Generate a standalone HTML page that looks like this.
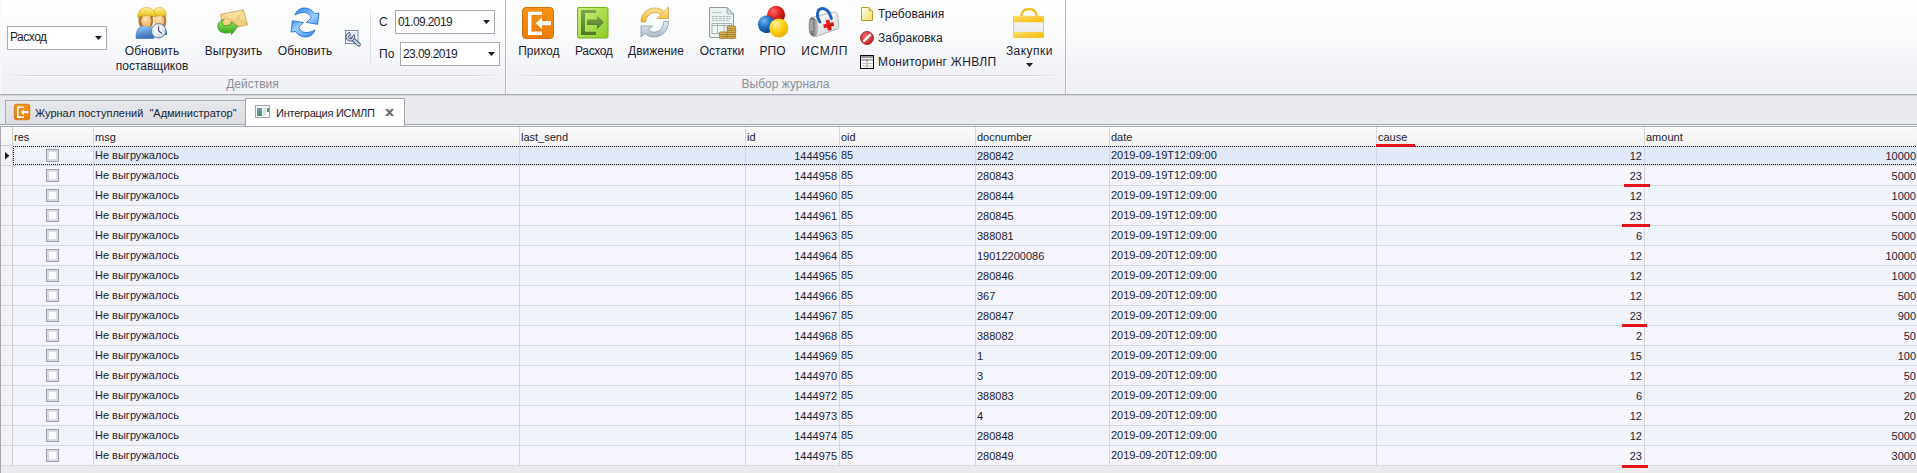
<!DOCTYPE html><html><head><meta charset="utf-8"><style>
*{margin:0;padding:0;box-sizing:border-box}
html,body{width:1917px;height:473px;overflow:hidden;background:#e9eaee;font-family:"Liberation Sans",sans-serif;color:#1c1c30}
.a{position:absolute}
.t12{position:absolute;font-size:12px;line-height:15px;white-space:pre;height:15px}
.t11{position:absolute;font-size:11px;line-height:13px;white-space:pre;height:13px}
.c{text-align:center}
.r{text-align:right}
svg{position:absolute;overflow:visible}
</style></head><body>
<div class="a" style="left:0;top:0;width:1917px;height:94px;background:linear-gradient(#fefefe 0%,#fafbfc 35%,#f1f2f6 80%,#eef0f4 100%)"></div>
<div class="a" style="left:0;top:94px;width:1917px;height:1px;background:#a9acb3"></div>
<div class="a" style="left:0;top:0;width:1px;height:94px;background:#f8f8fa"></div>
<div class="a" style="left:0;top:95px;width:1917px;height:1px;background:#d6d8dd"></div>
<div class="a" style="left:505px;top:0;width:1px;height:94px;background:#b6b9c0"></div>
<div class="a" style="left:506px;top:0;width:1px;height:94px;background:#fbfbfc"></div>
<div class="a" style="left:1065px;top:0;width:1px;height:94px;background:#b6b9c0"></div>
<div class="a" style="left:1066px;top:0;width:1px;height:94px;background:#fbfbfc"></div>
<div class="a" style="left:4px;top:75px;width:499px;height:1px;background:linear-gradient(90deg,rgba(216,217,222,0),#d8d9de 6%,#d8d9de 94%,rgba(216,217,222,0))"></div>
<div class="a" style="left:4px;top:76px;width:499px;height:1px;background:linear-gradient(90deg,rgba(255,255,255,0),#fdfdfe 6%,#fdfdfe 94%,rgba(255,255,255,0))"></div>
<div class="a" style="left:509px;top:75px;width:554px;height:1px;background:linear-gradient(90deg,rgba(216,217,222,0),#d8d9de 6%,#d8d9de 94%,rgba(216,217,222,0))"></div>
<div class="a" style="left:509px;top:76px;width:554px;height:1px;background:linear-gradient(90deg,rgba(255,255,255,0),#fdfdfe 6%,#fdfdfe 94%,rgba(255,255,255,0))"></div>
<div class="t12 c" style="left:0;top:77px;width:505px;color:#8d9099">Действия</div>
<div class="t12 c" style="left:506px;top:77px;width:559px;color:#8d9099">Выбор журнала</div>
<div class="a" style="left:370px;top:7px;width:1px;height:61px;background:linear-gradient(rgba(220,222,226,0),#dcdee2 15%,#dcdee2 85%,rgba(220,222,226,0))"></div>
<div class="a" style="left:7px;top:26px;width:100px;height:24px;background:#fff;border:1px solid #a7aab1"></div>
<div class="t12" style="left:10px;top:30px;letter-spacing:-0.5px">Расход</div>
<svg style="left:95px;top:36px" width="7" height="4"><path d="M0,0 H7 L3.5,4 Z" fill="#1b1b2b"/></svg>
<div class="t12" style="left:379px;top:15px">С</div>
<div class="a" style="left:395px;top:10px;width:100px;height:24px;background:#fff;border:1px solid #a7aab1"></div>
<div class="t12" style="left:398px;top:15px;letter-spacing:-0.6px">01.09.2019</div>
<svg style="left:483px;top:20px" width="7" height="4"><path d="M0,0 H7 L3.5,4 Z" fill="#1b1b2b"/></svg>
<div class="t12" style="left:379px;top:47px">По</div>
<div class="a" style="left:400px;top:42px;width:100px;height:24px;background:#fff;border:1px solid #a7aab1"></div>
<div class="t12" style="left:403px;top:47px;letter-spacing:-0.6px">23.09.2019</div>
<svg style="left:488px;top:52px" width="7" height="4"><path d="M0,0 H7 L3.5,4 Z" fill="#1b1b2b"/></svg>
<div class="t12 c" style="left:92.0px;top:44px;width:120px">Обновить</div>
<div class="t12 c" style="left:92.0px;top:59px;width:120px">поставщиков</div>
<div class="t12 c" style="left:173.5px;top:44px;width:120px">Выгрузить</div>
<div class="t12 c" style="left:245.0px;top:44px;width:120px">Обновить</div>
<div class="t12 c" style="left:478.79999999999995px;top:44px;width:120px">Приход</div>
<div class="t12 c" style="left:533.8px;top:44px;width:120px"><span style='letter-spacing:-0.35px'>Расход</span></div>
<div class="t12 c" style="left:596.0px;top:44px;width:120px">Движение</div>
<div class="t12 c" style="left:662.0px;top:44px;width:120px">Остатки</div>
<div class="t12 c" style="left:712.5px;top:44px;width:120px">РПО</div>
<div class="t12 c" style="left:764.7px;top:44px;width:120px"><span style='letter-spacing:0.6px'>ИСМЛП</span></div>
<div class="t12 c" style="left:969.4000000000001px;top:44px;width:120px"><span style='letter-spacing:0.45px'>Закупки</span></div>
<svg style="left:1026px;top:63px" width="7" height="4"><path d="M0,0 H7 L3.5,4 Z" fill="#1b1b2b"/></svg>
<div class="t12" style="left:878px;top:7px">Требования</div>
<div class="t12" style="left:878px;top:31px">Забраковка</div>
<div class="t12" style="left:878px;top:55px;letter-spacing:0.27px">Мониторинг ЖНВЛП</div>
<!-- users + clock -->
<svg style="left:135px;top:7px" width="32" height="32" viewBox="0 0 32 32">
<defs>
<linearGradient id="hair" x1="0" y1="0" x2="0" y2="1"><stop offset="0" stop-color="#fff0a0"/><stop offset="0.6" stop-color="#f4cf3a"/><stop offset="1" stop-color="#e0aa10"/></linearGradient>
<radialGradient id="skin" cx="0.45" cy="0.35" r="0.7"><stop offset="0" stop-color="#ffe6b0"/><stop offset="1" stop-color="#eeb060"/></radialGradient>
<linearGradient id="body" x1="0" y1="0" x2="0.3" y2="1"><stop offset="0" stop-color="#a8d0f4"/><stop offset="0.5" stop-color="#6aa4e0"/><stop offset="1" stop-color="#3a70bc"/></linearGradient>
<radialGradient id="clk" cx="0.4" cy="0.35" r="0.75"><stop offset="0" stop-color="#ffffff"/><stop offset="0.7" stop-color="#dfe6f4"/><stop offset="1" stop-color="#9eaccc"/></radialGradient>
</defs>
<path d="M30.5,9 C31.8,13 31.5,18 29.5,21 L27,21 L27,9 Z" fill="#b47a3a"/>
<path d="M15,28 C15,22 18,18.5 24,18.5 C30,18.5 32,22 32,28 Z" fill="url(#body)"/>
<ellipse cx="24.2" cy="13.8" rx="5" ry="5.8" fill="url(#skin)"/>
<path d="M17,10.5 C16.8,3.5 20.5,0.5 24.5,0.5 C28.5,0.5 31.5,3.5 31,10 C29,8.8 27,8.5 24.5,8.5 C21.5,8.5 19,9.2 17,10.5 Z" fill="url(#hair)" stroke="#d2a418" stroke-width="0.6"/>
<path d="M4.2,9 C2.8,13 3.3,18 5.8,20 L8,20 L8,9 Z M17.5,9 C18.5,13 18.5,17 16.5,20 L15,20 L15,9 Z" fill="#b47a3a"/>
<path d="M1,31.5 C0.8,24 3.5,18.5 10,18.5 C16.5,18.5 19.3,24 19,31.5 Z" fill="url(#body)" stroke="#3c6fb4" stroke-width="0.6"/>
<ellipse cx="11.2" cy="13.8" rx="5" ry="5.8" fill="url(#skin)"/>
<path d="M2.8,10.8 C2.6,3.5 6.5,0.5 11.5,0.5 C16.5,0.5 20.8,3.5 20.5,10 C18,8.8 15,8.4 11.5,8.4 C8,8.4 5,9.2 2.8,10.8 Z" fill="url(#hair)" stroke="#d2a418" stroke-width="0.6"/>
<circle cx="23.6" cy="23.8" r="7.2" fill="url(#clk)" stroke="#6e7c9c" stroke-width="1"/>
<path d="M23.6,17.8 V19 M23.6,28.6 V29.8 M17.6,23.8 H18.8 M28.4,23.8 H29.6" stroke="#8a96b0" stroke-width="0.8"/>
<path d="M23.6,19.5 V23.8 L26.8,26.5" stroke="#3a4460" stroke-width="1.1" fill="none"/>
</svg>
<!-- envelope + green arrow -->
<svg style="left:216px;top:5px" width="32" height="32" viewBox="0 0 32 32">
<defs>
<linearGradient id="env" x1="0" y1="0" x2="0" y2="1"><stop offset="0" stop-color="#fde9b0"/><stop offset="1" stop-color="#f0c468"/></linearGradient>
<linearGradient id="grn" x1="0" y1="0" x2="0" y2="1"><stop offset="0" stop-color="#a8f070"/><stop offset="1" stop-color="#2aa010"/></linearGradient>
</defs>
<path d="M4.6,9.4 L27.4,4.8 L31.5,19.8 L7.8,24.8 Z" fill="url(#env)" stroke="#c99a4a" stroke-width="0.8"/>
<path d="M4.8,9.6 L19,17.5 L27.2,5 M8,24.6 L17.5,15.5 M31.3,19.6 L21,13" stroke="#d9ad60" stroke-width="0.7" fill="none"/>
<path d="M8.5,14.2 C2,15.8 0.3,21 3,25 C5.5,28.5 10.5,28.6 15.5,27.2 L15.5,29.6 L21.8,21.5 L15,16.8 L15,19.6 C11,21.2 7.2,21 6,19 C5.3,17.5 6.5,15.5 8.5,14.2 Z" fill="url(#grn)" stroke="#279012" stroke-width="0.7"/>
</svg>
<!-- refresh blue -->
<svg style="left:289px;top:6px" width="32" height="32" viewBox="0 0 32 32">
<defs>
<linearGradient id="blu" x1="0" y1="0" x2="1" y2="1"><stop offset="0" stop-color="#2c86ee"/><stop offset="0.65" stop-color="#9ad0ff"/><stop offset="1" stop-color="#4a94ec"/></linearGradient>
</defs>
<path id="rfa" d="M6,9 C8,3.5 12,2 15.5,2 C20,2 23.5,4.5 25.5,7.5 L30,7 L28.6,18.3 L17.5,16.4 L22.3,11.8 C20.8,8.5 18.5,6.5 15.5,6.5 C11.5,6.5 8.5,7.5 6,9 Z" fill="url(#blu)" stroke="#1a66d2" stroke-width="0.8"/>
<path d="M6,9 C8,3.5 12,2 15.5,2 C20,2 23.5,4.5 25.5,7.5 L30,7 L28.6,18.3 L17.5,16.4 L22.3,11.8 C20.8,8.5 18.5,6.5 15.5,6.5 C11.5,6.5 8.5,7.5 6,9 Z" fill="url(#blu)" stroke="#1a66d2" stroke-width="0.8" transform="rotate(180 16 16.5)"/>
</svg>
<!-- wrench small -->
<svg style="left:345px;top:30px" width="16" height="17" viewBox="0 0 16 17">
<rect x="0.5" y="0.5" width="12.5" height="13" fill="#f2f5fb" stroke="#7b8ec6" stroke-width="1"/>
<path d="M7,8.5 L13.8,14.6" stroke="#4c5672" stroke-width="4" stroke-linecap="round"/>
<path d="M7,8.5 L13.8,14.6" stroke="#c4d3e8" stroke-width="2.2" stroke-linecap="round"/>
<path d="M9.2,4.6 A4.4,4.4 0 1 1 4.6,2.4 L5.6,5.2 A1.8,1.8 0 1 0 7.2,6.4 Z" fill="#c4d3e8" stroke="#4c5672" stroke-width="1"/>
</svg>
<!-- Prihod orange -->
<svg style="left:522px;top:7px" width="32" height="32" viewBox="0 0 32 32">
<defs><linearGradient id="org" x1="0" y1="0" x2="0" y2="1"><stop offset="0" stop-color="#f69218"/><stop offset="1" stop-color="#ec7c00"/></linearGradient></defs>
<rect x="0.5" y="0.5" width="31" height="31" rx="3.5" fill="url(#org)" stroke="#d2700e" stroke-width="1"/>
<path d="M6,4.8 H20 V8 H9.4 V24.4 H20 V28 H6 Z" fill="#fff"/>
<path d="M13.8,16.2 L20,10.3 V14 H29 V18.3 H20 V22.3 Z" fill="#fff"/>
</svg>
<!-- Rashod green -->
<svg style="left:577px;top:7px" width="32" height="32" viewBox="0 0 32 32">
<defs>
<linearGradient id="lg" x1="0" y1="0" x2="1" y2="1"><stop offset="0" stop-color="#d0f07a"/><stop offset="1" stop-color="#8ccc2a"/></linearGradient>
<linearGradient id="dg" x1="0" y1="0" x2="0" y2="1"><stop offset="0" stop-color="#7aa850"/><stop offset="1" stop-color="#4e7a26"/></linearGradient>
</defs>
<rect x="0.5" y="0.5" width="30.5" height="30.5" rx="1.5" fill="url(#lg)" stroke="#6eb21c" stroke-width="1"/>
<path d="M4,3 H19 V6 H8 V24.8 H19 V28 H4 Z" fill="url(#dg)"/>
<path d="M10,12.5 H20 V8.5 L27,15.3 L20,22 V18 H10 Z" fill="url(#dg)"/>
</svg>
<!-- Movement -->
<svg style="left:638px;top:5px" width="32" height="33" viewBox="0 0 32 33">
<defs>
<linearGradient id="yel" x1="0" y1="0" x2="0" y2="1"><stop offset="0" stop-color="#fdeaa8"/><stop offset="1" stop-color="#f2b628"/></linearGradient>
<linearGradient id="gry" x1="0" y1="0" x2="0" y2="1"><stop offset="0" stop-color="#e6edf2"/><stop offset="1" stop-color="#a9b9c8"/></linearGradient>
</defs>
<path d="M3,17 C3,9 9,3 17,3 C21,3 24,4.5 26,6.5 L30.5,2 V13.5 H19 L23,9.5 C21.5,8.3 19.5,7.7 17,7.7 C11.5,7.7 7.7,12 7.7,17 Z" fill="url(#yel)" stroke="#dba040" stroke-width="0.8"/>
<path d="M30.5,16.5 C30.5,25.5 24,32 16,32 C12,32 9,30.5 7,28.5 L3,32 V21 H14.5 L10.5,25 C12,26.3 14,27.2 16,27.2 C21.5,27.2 25.6,22.5 25.6,16.5 Z" fill="url(#gry)" stroke="#8797a8" stroke-width="0.8"/>
</svg>
<!-- Ostatki -->
<svg style="left:706px;top:5px" width="32" height="35" viewBox="0 0 32 35">
<path d="M3.5,2.5 H21 L27.5,9 V31 Q27.5,32.5 26,32.5 H5 Q3.5,32.5 3.5,31 Z" fill="#ecf3f3" stroke="#8c9c9c" stroke-width="1"/>
<path d="M21,2.5 V7.5 Q21,9 22.5,9 H27.5 Z" fill="#d4e0e0" stroke="#8c9c9c" stroke-width="0.8"/>
<path d="M6,7.5 H15 M6,11.5 H25 M6,13.5 H25 M6,15.5 H24" stroke="#9aa6a6" stroke-width="0.8" stroke-dasharray="2.5 1"/>
<rect x="6" y="18.5" width="19.5" height="10" fill="none" stroke="#a4b0b0" stroke-width="0.9"/>
<path d="M6,20.5 H25.5 M11.5,18.5 V28.5 M18,18.5 V28.5" stroke="#a4b0b0" stroke-width="0.9"/>
<g fill="#d8b45a" stroke="#9a7428" stroke-width="0.8">
<rect x="13.3" y="31" width="8" height="2.6" rx="1.3"/>
<rect x="13.3" y="29" width="8" height="2.6" rx="1.3"/>
<rect x="13.3" y="27" width="8" height="2.6" rx="1.3"/>
<rect x="21" y="31" width="8.8" height="2.6" rx="1.3"/>
<rect x="21" y="29" width="8.8" height="2.6" rx="1.3"/>
<rect x="21" y="27" width="8.8" height="2.6" rx="1.3"/>
<rect x="21" y="25" width="8.8" height="2.6" rx="1.3"/>
<rect x="21" y="23" width="8.8" height="2.6" rx="1.3"/>
<rect x="21" y="21" width="8.8" height="2.6" rx="1.3"/>
</g>
</svg>
<!-- RPO balls -->
<svg style="left:757px;top:5px" width="32" height="33" viewBox="0 0 32 33">
<defs>
<radialGradient id="rb" cx="0.35" cy="0.3" r="0.75"><stop offset="0" stop-color="#ff6a6a"/><stop offset="0.5" stop-color="#e02020"/><stop offset="1" stop-color="#a00808"/></radialGradient>
<radialGradient id="bb" cx="0.35" cy="0.3" r="0.75"><stop offset="0" stop-color="#7ab8f8"/><stop offset="0.5" stop-color="#1e6ec0"/><stop offset="1" stop-color="#0a4088"/></radialGradient>
<radialGradient id="yb" cx="0.35" cy="0.3" r="0.75"><stop offset="0" stop-color="#fff2a0"/><stop offset="0.5" stop-color="#fcd21a"/><stop offset="1" stop-color="#eaa800"/></radialGradient>
</defs>
<circle cx="19.1" cy="9.8" r="9" fill="url(#rb)"/>
<circle cx="9.6" cy="19.3" r="8.7" fill="url(#bb)"/>
<circle cx="21.8" cy="23" r="9.5" fill="url(#yb)"/>
</svg>
<!-- ISMLP medical bag -->
<svg style="left:805px;top:5px" width="36" height="35" viewBox="0 0 36 35">
<defs>
<linearGradient id="cap" x1="0" y1="0" x2="1" y2="0"><stop offset="0" stop-color="#d8d8d8"/><stop offset="0.3" stop-color="#6a6a6a"/><stop offset="0.75" stop-color="#9a9a9a"/><stop offset="1" stop-color="#e8e8e8"/></linearGradient>
<linearGradient id="bag" x1="0" y1="0" x2="0.4" y2="1"><stop offset="0" stop-color="#ffffff"/><stop offset="1" stop-color="#dedede"/></linearGradient>
<linearGradient id="crs" x1="0" y1="0" x2="1" y2="1"><stop offset="0" stop-color="#ff3030"/><stop offset="1" stop-color="#c80000"/></linearGradient>
</defs>
<path d="M7,12.5 L29,7 C31,6.8 32,8 32.5,10 L33.8,20.5 C34,22.5 33.5,23.5 32,24 L12,31.2 C9,32 4.5,31.5 4.3,25 L4.3,18 C4.3,15 5.2,13 7,12.5 Z" fill="url(#bag)" stroke="#a2a2a2" stroke-width="0.8"/>
<path d="M6.5,12.8 C4.5,13.5 4.2,17 4.3,23 C4.4,28 6,30.8 9,31 C11.5,30.7 12.3,28 12.2,22 C12,16 10.5,12.5 6.5,12.8 Z" fill="url(#cap)" stroke="#6a6a6a" stroke-width="0.6"/>
<path d="M7,15 V26" stroke="#f4f4f4" stroke-width="0.8"/>
<path d="M15,17 C11,12 11.5,3.5 17.5,3.5 C22,3.5 24.5,7 26.5,13.5" stroke="#1f5fc0" stroke-width="2.8" fill="none" stroke-linecap="round"/>
<g transform="rotate(-14 23.5 20.2)" fill="url(#crs)"><rect x="21.7" y="14.8" width="3.8" height="10.6"/><rect x="18.4" y="18.3" width="10.4" height="3.8"/></g>
</svg>
<!-- Trebovaniya doc -->
<svg style="left:861px;top:7px" width="13" height="15" viewBox="0 0 13 15">
<defs><linearGradient id="pd" x1="0" y1="0" x2="0.6" y2="1"><stop offset="0" stop-color="#fffef0"/><stop offset="1" stop-color="#f3e47a"/></linearGradient></defs>
<path d="M0.5,0.5 H8 L11.5,4 V13.5 H0.5 Z" fill="url(#pd)" stroke="#c49a20" stroke-width="1"/>
<path d="M8,0.5 V4 H11.5" fill="none" stroke="#c49a20" stroke-width="0.8"/>
</svg>
<!-- Zabrakovka -->
<svg style="left:860px;top:31px" width="14" height="14" viewBox="0 0 14 14">
<defs><radialGradient id="nr" cx="0.4" cy="0.35" r="0.7"><stop offset="0" stop-color="#f07070"/><stop offset="1" stop-color="#b81c1c"/></radialGradient></defs>
<circle cx="7" cy="7" r="6.5" fill="url(#nr)" stroke="#a01818" stroke-width="0.8"/>
<path d="M3.3,10.7 L10.7,3.3" stroke="#fff" stroke-width="2.4"/>
</svg>
<!-- Monitoring table -->
<svg style="left:860px;top:55px" width="15" height="15" viewBox="0 0 15 15">
<rect x="0.5" y="0.5" width="13" height="13" fill="#fff" stroke="#0a0a0a" stroke-width="1"/>
<rect x="1" y="1" width="12" height="2.2" fill="#9c9c9c"/>
<rect x="1" y="4" width="12" height="2" fill="#b4b4b4"/>
<path d="M7,4 V13.5" stroke="#8a8a8a" stroke-width="1"/>
<path d="M2,8.5 H6 M8,8.5 H12.5 M2,11 H6 M8,11 H12.5" stroke="#b8b8b8" stroke-width="0.9"/>
</svg>
<!-- Zakupki bag -->
<svg style="left:1012px;top:6px" width="33" height="33" viewBox="0 0 33 33">
<defs>
<linearGradient id="zy" x1="0" y1="0" x2="1" y2="1"><stop offset="0" stop-color="#ffe070"/><stop offset="1" stop-color="#f8b800"/></linearGradient>
<linearGradient id="zw" x1="0" y1="0" x2="0" y2="1"><stop offset="0" stop-color="#fafafa"/><stop offset="1" stop-color="#e4e4e4"/></linearGradient>
</defs>
<path d="M9.4,11 C9.4,5.2 12.8,3.2 17,3.2 C21.2,3.2 24.6,5.2 24.6,11" stroke="#efb80c" stroke-width="2.3" fill="none"/>
<path d="M10.2,11 C10.2,6 13.2,4 17,4 C20.8,4 23.8,6 23.8,11" stroke="#ffe27a" stroke-width="0.6" fill="none"/>
<rect x="1.7" y="10.2" width="29.8" height="21.3" fill="url(#zw)" stroke="#e2ac00" stroke-width="0.6"/>
<rect x="1.7" y="10.2" width="29.8" height="6" fill="url(#zy)"/>
<rect x="1.7" y="26" width="29.8" height="5.5" fill="url(#zy)"/>
</svg>

<div class="a" style="left:0;top:124px;width:1917px;height:1px;background:#a3a6ae"></div>
<div class="a" style="left:0;top:125px;width:1917px;height:1px;background:#f4f5f7"></div>
<div class="a" style="left:5px;top:100px;width:241px;height:24px;background:linear-gradient(#e6e7eb,#dcdde2);border:1px solid #a8abb2;border-bottom:none"></div>
<div class="t11" style="left:35px;top:107px">Журнал поступлений  "Администратор"</div>
<div class="a" style="left:245px;top:98px;width:160px;height:28px;background:#fff;border:1px solid #a3a6ae;border-bottom:none"></div>
<div class="t11" style="left:276px;top:107px;letter-spacing:-0.25px">Интеграция ИСМЛП</div>

<svg style="left:14px;top:104px" width="16" height="16" viewBox="0 0 32 32">
<rect x="0.5" y="0.5" width="31" height="31" rx="4" fill="url(#org)" stroke="#d2700e" stroke-width="1.5"/>
<path d="M6,4.8 H20 V8 H9.4 V24.4 H20 V28 H6 Z" fill="#fff"/>
<path d="M13.8,16.2 L20,10.3 V14 H29 V18.3 H20 V22.3 Z" fill="#fff"/>
</svg>
<!-- tab window icon -->
<svg style="left:255px;top:105px" width="15" height="13" viewBox="0 0 15 13">
<defs><linearGradient id="wg" x1="0" y1="0" x2="0.3" y2="1"><stop offset="0" stop-color="#6e9cc6"/><stop offset="1" stop-color="#3f9c5e"/></linearGradient></defs>
<rect x="0.5" y="0.5" width="14" height="12" fill="#fbfbfb" stroke="#a2a2a2" stroke-width="1"/>
<rect x="2" y="3" width="5" height="8" fill="url(#wg)"/>
<rect x="8" y="3" width="3" height="8" fill="#dedede"/>
<rect x="12" y="3" width="2" height="4" fill="url(#wg)"/>
</svg>

<svg style="left:384px;top:108px" width="11" height="9"><path d="M1,1 H4 L10.2,8 H7.2 Z M7.2,1 H10.2 L4,8 H1 Z" fill="#6c707c"/></svg>
<div class="a" style="left:0;top:126px;width:1917px;height:1px;background:#a6a9b1"></div>
<div class="a" style="left:0;top:126px;width:1px;height:347px;background:#a6a9b1"></div>
<div class="a" style="left:1px;top:466px;width:1916px;height:7px;background:#ebebee"></div>
<div class="a" style="left:1px;top:127px;width:1916px;height:18px;background:linear-gradient(#fafafa,#f3f3f4)"></div>
<div class="a" style="left:1px;top:145px;width:11px;height:1px;background:#d0d2d7"></div>
<div class="a" style="left:13px;top:145px;width:1904px;height:1px;background:#e9eaed"></div>
<div class="t11" style="left:14px;top:131px">res</div>
<div class="t11" style="left:95px;top:131px">msg</div>
<div class="t11" style="left:521px;top:131px">last_send</div>
<div class="t11" style="left:747px;top:131px">id</div>
<div class="t11" style="left:841px;top:131px">oid</div>
<div class="t11" style="left:977px;top:131px">docnumber</div>
<div class="t11" style="left:1111px;top:131px">date</div>
<div class="t11" style="left:1378px;top:131px">cause</div>
<div class="t11" style="left:1646px;top:131px">amount</div>
<div class="a" style="left:1px;top:146px;width:11px;height:19px;background:#f3f3f5"></div>
<div class="a" style="left:13px;top:146px;width:1904px;height:19px;background:#f0f3f9"></div>
<div class="a" style="left:94px;top:146px;width:1823px;height:19px;background:#e2eafa"></div>
<div class="a" style="left:1px;top:165px;width:1916px;height:1px;background:#d9dadf"></div>
<div class="a" style="left:46px;top:149px;width:13px;height:13px;background:#fff;border:1px solid #9da0a8;box-shadow:inset 0 0 0 2px #d9dce2"></div>
<div class="t11" style="left:95px;top:149px">Не выгружалось</div>
<div class="t11 r" style="left:746px;top:150px;width:91px">1444956</div>
<div class="t11" style="left:841px;top:149px">85</div>
<div class="t11" style="left:977px;top:150px">280842</div>
<div class="t11" style="left:1111px;top:149px">2019-09-19T12:09:00</div>
<div class="t11 r" style="left:1377px;top:150px;width:265px">12</div>
<div class="t11 r" style="left:1645px;top:150px;width:271px">10000</div>
<div class="a" style="left:1px;top:166px;width:11px;height:19px;background:#f3f3f5"></div>
<div class="a" style="left:13px;top:166px;width:1904px;height:19px;background:#f6f4fc"></div>
<div class="a" style="left:1px;top:185px;width:1916px;height:1px;background:#d9dadf"></div>
<div class="a" style="left:46px;top:169px;width:13px;height:13px;background:#fff;border:1px solid #9da0a8;box-shadow:inset 0 0 0 2px #d9dce2"></div>
<div class="t11" style="left:95px;top:169px">Не выгружалось</div>
<div class="t11 r" style="left:746px;top:170px;width:91px">1444958</div>
<div class="t11" style="left:841px;top:169px">85</div>
<div class="t11" style="left:977px;top:170px">280843</div>
<div class="t11" style="left:1111px;top:169px">2019-09-19T12:09:00</div>
<div class="t11 r" style="left:1377px;top:170px;width:265px">23</div>
<div class="t11 r" style="left:1645px;top:170px;width:271px">5000</div>
<div class="a" style="left:1px;top:186px;width:11px;height:19px;background:#f3f3f5"></div>
<div class="a" style="left:13px;top:186px;width:1904px;height:19px;background:#f0f3f9"></div>
<div class="a" style="left:1px;top:205px;width:1916px;height:1px;background:#d9dadf"></div>
<div class="a" style="left:46px;top:189px;width:13px;height:13px;background:#fff;border:1px solid #9da0a8;box-shadow:inset 0 0 0 2px #d9dce2"></div>
<div class="t11" style="left:95px;top:189px">Не выгружалось</div>
<div class="t11 r" style="left:746px;top:190px;width:91px">1444960</div>
<div class="t11" style="left:841px;top:189px">85</div>
<div class="t11" style="left:977px;top:190px">280844</div>
<div class="t11" style="left:1111px;top:189px">2019-09-19T12:09:00</div>
<div class="t11 r" style="left:1377px;top:190px;width:265px">12</div>
<div class="t11 r" style="left:1645px;top:190px;width:271px">1000</div>
<div class="a" style="left:1px;top:206px;width:11px;height:19px;background:#f3f3f5"></div>
<div class="a" style="left:13px;top:206px;width:1904px;height:19px;background:#f6f4fc"></div>
<div class="a" style="left:1px;top:225px;width:1916px;height:1px;background:#d9dadf"></div>
<div class="a" style="left:46px;top:209px;width:13px;height:13px;background:#fff;border:1px solid #9da0a8;box-shadow:inset 0 0 0 2px #d9dce2"></div>
<div class="t11" style="left:95px;top:209px">Не выгружалось</div>
<div class="t11 r" style="left:746px;top:210px;width:91px">1444961</div>
<div class="t11" style="left:841px;top:209px">85</div>
<div class="t11" style="left:977px;top:210px">280845</div>
<div class="t11" style="left:1111px;top:209px">2019-09-19T12:09:00</div>
<div class="t11 r" style="left:1377px;top:210px;width:265px">23</div>
<div class="t11 r" style="left:1645px;top:210px;width:271px">5000</div>
<div class="a" style="left:1px;top:226px;width:11px;height:19px;background:#f3f3f5"></div>
<div class="a" style="left:13px;top:226px;width:1904px;height:19px;background:#f0f3f9"></div>
<div class="a" style="left:1px;top:245px;width:1916px;height:1px;background:#d9dadf"></div>
<div class="a" style="left:46px;top:229px;width:13px;height:13px;background:#fff;border:1px solid #9da0a8;box-shadow:inset 0 0 0 2px #d9dce2"></div>
<div class="t11" style="left:95px;top:229px">Не выгружалось</div>
<div class="t11 r" style="left:746px;top:230px;width:91px">1444963</div>
<div class="t11" style="left:841px;top:229px">85</div>
<div class="t11" style="left:977px;top:230px">388081</div>
<div class="t11" style="left:1111px;top:229px">2019-09-19T12:09:00</div>
<div class="t11 r" style="left:1377px;top:230px;width:265px">6</div>
<div class="t11 r" style="left:1645px;top:230px;width:271px">5000</div>
<div class="a" style="left:1px;top:246px;width:11px;height:19px;background:#f3f3f5"></div>
<div class="a" style="left:13px;top:246px;width:1904px;height:19px;background:#f6f4fc"></div>
<div class="a" style="left:1px;top:265px;width:1916px;height:1px;background:#d9dadf"></div>
<div class="a" style="left:46px;top:249px;width:13px;height:13px;background:#fff;border:1px solid #9da0a8;box-shadow:inset 0 0 0 2px #d9dce2"></div>
<div class="t11" style="left:95px;top:249px">Не выгружалось</div>
<div class="t11 r" style="left:746px;top:250px;width:91px">1444964</div>
<div class="t11" style="left:841px;top:249px">85</div>
<div class="t11" style="left:977px;top:250px">19012200086</div>
<div class="t11" style="left:1111px;top:249px">2019-09-20T12:09:00</div>
<div class="t11 r" style="left:1377px;top:250px;width:265px">12</div>
<div class="t11 r" style="left:1645px;top:250px;width:271px">10000</div>
<div class="a" style="left:1px;top:266px;width:11px;height:19px;background:#f3f3f5"></div>
<div class="a" style="left:13px;top:266px;width:1904px;height:19px;background:#f0f3f9"></div>
<div class="a" style="left:1px;top:285px;width:1916px;height:1px;background:#d9dadf"></div>
<div class="a" style="left:46px;top:269px;width:13px;height:13px;background:#fff;border:1px solid #9da0a8;box-shadow:inset 0 0 0 2px #d9dce2"></div>
<div class="t11" style="left:95px;top:269px">Не выгружалось</div>
<div class="t11 r" style="left:746px;top:270px;width:91px">1444965</div>
<div class="t11" style="left:841px;top:269px">85</div>
<div class="t11" style="left:977px;top:270px">280846</div>
<div class="t11" style="left:1111px;top:269px">2019-09-20T12:09:00</div>
<div class="t11 r" style="left:1377px;top:270px;width:265px">12</div>
<div class="t11 r" style="left:1645px;top:270px;width:271px">1000</div>
<div class="a" style="left:1px;top:286px;width:11px;height:19px;background:#f3f3f5"></div>
<div class="a" style="left:13px;top:286px;width:1904px;height:19px;background:#f6f4fc"></div>
<div class="a" style="left:1px;top:305px;width:1916px;height:1px;background:#d9dadf"></div>
<div class="a" style="left:46px;top:289px;width:13px;height:13px;background:#fff;border:1px solid #9da0a8;box-shadow:inset 0 0 0 2px #d9dce2"></div>
<div class="t11" style="left:95px;top:289px">Не выгружалось</div>
<div class="t11 r" style="left:746px;top:290px;width:91px">1444966</div>
<div class="t11" style="left:841px;top:289px">85</div>
<div class="t11" style="left:977px;top:290px">367</div>
<div class="t11" style="left:1111px;top:289px">2019-09-20T12:09:00</div>
<div class="t11 r" style="left:1377px;top:290px;width:265px">12</div>
<div class="t11 r" style="left:1645px;top:290px;width:271px">500</div>
<div class="a" style="left:1px;top:306px;width:11px;height:19px;background:#f3f3f5"></div>
<div class="a" style="left:13px;top:306px;width:1904px;height:19px;background:#f0f3f9"></div>
<div class="a" style="left:1px;top:325px;width:1916px;height:1px;background:#d9dadf"></div>
<div class="a" style="left:46px;top:309px;width:13px;height:13px;background:#fff;border:1px solid #9da0a8;box-shadow:inset 0 0 0 2px #d9dce2"></div>
<div class="t11" style="left:95px;top:309px">Не выгружалось</div>
<div class="t11 r" style="left:746px;top:310px;width:91px">1444967</div>
<div class="t11" style="left:841px;top:309px">85</div>
<div class="t11" style="left:977px;top:310px">280847</div>
<div class="t11" style="left:1111px;top:309px">2019-09-20T12:09:00</div>
<div class="t11 r" style="left:1377px;top:310px;width:265px">23</div>
<div class="t11 r" style="left:1645px;top:310px;width:271px">900</div>
<div class="a" style="left:1px;top:326px;width:11px;height:19px;background:#f3f3f5"></div>
<div class="a" style="left:13px;top:326px;width:1904px;height:19px;background:#f6f4fc"></div>
<div class="a" style="left:1px;top:345px;width:1916px;height:1px;background:#d9dadf"></div>
<div class="a" style="left:46px;top:329px;width:13px;height:13px;background:#fff;border:1px solid #9da0a8;box-shadow:inset 0 0 0 2px #d9dce2"></div>
<div class="t11" style="left:95px;top:329px">Не выгружалось</div>
<div class="t11 r" style="left:746px;top:330px;width:91px">1444968</div>
<div class="t11" style="left:841px;top:329px">85</div>
<div class="t11" style="left:977px;top:330px">388082</div>
<div class="t11" style="left:1111px;top:329px">2019-09-20T12:09:00</div>
<div class="t11 r" style="left:1377px;top:330px;width:265px">2</div>
<div class="t11 r" style="left:1645px;top:330px;width:271px">50</div>
<div class="a" style="left:1px;top:346px;width:11px;height:19px;background:#f3f3f5"></div>
<div class="a" style="left:13px;top:346px;width:1904px;height:19px;background:#f0f3f9"></div>
<div class="a" style="left:1px;top:365px;width:1916px;height:1px;background:#d9dadf"></div>
<div class="a" style="left:46px;top:349px;width:13px;height:13px;background:#fff;border:1px solid #9da0a8;box-shadow:inset 0 0 0 2px #d9dce2"></div>
<div class="t11" style="left:95px;top:349px">Не выгружалось</div>
<div class="t11 r" style="left:746px;top:350px;width:91px">1444969</div>
<div class="t11" style="left:841px;top:349px">85</div>
<div class="t11" style="left:977px;top:350px">1</div>
<div class="t11" style="left:1111px;top:349px">2019-09-20T12:09:00</div>
<div class="t11 r" style="left:1377px;top:350px;width:265px">15</div>
<div class="t11 r" style="left:1645px;top:350px;width:271px">100</div>
<div class="a" style="left:1px;top:366px;width:11px;height:19px;background:#f3f3f5"></div>
<div class="a" style="left:13px;top:366px;width:1904px;height:19px;background:#f6f4fc"></div>
<div class="a" style="left:1px;top:385px;width:1916px;height:1px;background:#d9dadf"></div>
<div class="a" style="left:46px;top:369px;width:13px;height:13px;background:#fff;border:1px solid #9da0a8;box-shadow:inset 0 0 0 2px #d9dce2"></div>
<div class="t11" style="left:95px;top:369px">Не выгружалось</div>
<div class="t11 r" style="left:746px;top:370px;width:91px">1444970</div>
<div class="t11" style="left:841px;top:369px">85</div>
<div class="t11" style="left:977px;top:370px">3</div>
<div class="t11" style="left:1111px;top:369px">2019-09-20T12:09:00</div>
<div class="t11 r" style="left:1377px;top:370px;width:265px">12</div>
<div class="t11 r" style="left:1645px;top:370px;width:271px">50</div>
<div class="a" style="left:1px;top:386px;width:11px;height:19px;background:#f3f3f5"></div>
<div class="a" style="left:13px;top:386px;width:1904px;height:19px;background:#f0f3f9"></div>
<div class="a" style="left:1px;top:405px;width:1916px;height:1px;background:#d9dadf"></div>
<div class="a" style="left:46px;top:389px;width:13px;height:13px;background:#fff;border:1px solid #9da0a8;box-shadow:inset 0 0 0 2px #d9dce2"></div>
<div class="t11" style="left:95px;top:389px">Не выгружалось</div>
<div class="t11 r" style="left:746px;top:390px;width:91px">1444972</div>
<div class="t11" style="left:841px;top:389px">85</div>
<div class="t11" style="left:977px;top:390px">388083</div>
<div class="t11" style="left:1111px;top:389px">2019-09-20T12:09:00</div>
<div class="t11 r" style="left:1377px;top:390px;width:265px">6</div>
<div class="t11 r" style="left:1645px;top:390px;width:271px">20</div>
<div class="a" style="left:1px;top:406px;width:11px;height:19px;background:#f3f3f5"></div>
<div class="a" style="left:13px;top:406px;width:1904px;height:19px;background:#f6f4fc"></div>
<div class="a" style="left:1px;top:425px;width:1916px;height:1px;background:#d9dadf"></div>
<div class="a" style="left:46px;top:409px;width:13px;height:13px;background:#fff;border:1px solid #9da0a8;box-shadow:inset 0 0 0 2px #d9dce2"></div>
<div class="t11" style="left:95px;top:409px">Не выгружалось</div>
<div class="t11 r" style="left:746px;top:410px;width:91px">1444973</div>
<div class="t11" style="left:841px;top:409px">85</div>
<div class="t11" style="left:977px;top:410px">4</div>
<div class="t11" style="left:1111px;top:409px">2019-09-20T12:09:00</div>
<div class="t11 r" style="left:1377px;top:410px;width:265px">12</div>
<div class="t11 r" style="left:1645px;top:410px;width:271px">20</div>
<div class="a" style="left:1px;top:426px;width:11px;height:19px;background:#f3f3f5"></div>
<div class="a" style="left:13px;top:426px;width:1904px;height:19px;background:#f0f3f9"></div>
<div class="a" style="left:1px;top:445px;width:1916px;height:1px;background:#d9dadf"></div>
<div class="a" style="left:46px;top:429px;width:13px;height:13px;background:#fff;border:1px solid #9da0a8;box-shadow:inset 0 0 0 2px #d9dce2"></div>
<div class="t11" style="left:95px;top:429px">Не выгружалось</div>
<div class="t11 r" style="left:746px;top:430px;width:91px">1444974</div>
<div class="t11" style="left:841px;top:429px">85</div>
<div class="t11" style="left:977px;top:430px">280848</div>
<div class="t11" style="left:1111px;top:429px">2019-09-20T12:09:00</div>
<div class="t11 r" style="left:1377px;top:430px;width:265px">12</div>
<div class="t11 r" style="left:1645px;top:430px;width:271px">5000</div>
<div class="a" style="left:1px;top:446px;width:11px;height:19px;background:#f3f3f5"></div>
<div class="a" style="left:13px;top:446px;width:1904px;height:19px;background:#f6f4fc"></div>
<div class="a" style="left:1px;top:465px;width:1916px;height:1px;background:#d9dadf"></div>
<div class="a" style="left:46px;top:449px;width:13px;height:13px;background:#fff;border:1px solid #9da0a8;box-shadow:inset 0 0 0 2px #d9dce2"></div>
<div class="t11" style="left:95px;top:449px">Не выгружалось</div>
<div class="t11 r" style="left:746px;top:450px;width:91px">1444975</div>
<div class="t11" style="left:841px;top:449px">85</div>
<div class="t11" style="left:977px;top:450px">280849</div>
<div class="t11" style="left:1111px;top:449px">2019-09-20T12:09:00</div>
<div class="t11 r" style="left:1377px;top:450px;width:265px">23</div>
<div class="t11 r" style="left:1645px;top:450px;width:271px">3000</div>
<div class="a" style="left:12px;top:127px;width:1px;height:339px;background:#cdcfd5"></div>
<div class="a" style="left:93px;top:127px;width:1px;height:339px;background:#d6d7dc"></div>
<div class="a" style="left:519px;top:127px;width:1px;height:339px;background:#d6d7dc"></div>
<div class="a" style="left:745px;top:127px;width:1px;height:339px;background:#d6d7dc"></div>
<div class="a" style="left:839px;top:127px;width:1px;height:339px;background:#d6d7dc"></div>
<div class="a" style="left:975px;top:127px;width:1px;height:339px;background:#d6d7dc"></div>
<div class="a" style="left:1109px;top:127px;width:1px;height:339px;background:#d6d7dc"></div>
<div class="a" style="left:1376px;top:127px;width:1px;height:339px;background:#d6d7dc"></div>
<div class="a" style="left:1644px;top:127px;width:1px;height:339px;background:#d6d7dc"></div>
<svg style="left:5px;top:152px" width="5" height="8"><path d="M0,0 L4.5,3.75 L0,7.5 Z" fill="#1b1b35"/></svg>
<div class="a" style="left:13px;top:146px;width:80px;height:1px;background:repeating-linear-gradient(90deg,#111 0 1px,transparent 1px 2px)"></div>
<div class="a" style="left:13px;top:164px;width:80px;height:1px;background:repeating-linear-gradient(90deg,#111 0 1px,transparent 1px 2px)"></div>
<div class="a" style="left:94px;top:146px;width:425px;height:1px;background:repeating-linear-gradient(90deg,#111 0 1px,transparent 1px 2px)"></div>
<div class="a" style="left:94px;top:164px;width:425px;height:1px;background:repeating-linear-gradient(90deg,#111 0 1px,transparent 1px 2px)"></div>
<div class="a" style="left:520px;top:146px;width:225px;height:1px;background:repeating-linear-gradient(90deg,#111 0 1px,transparent 1px 2px)"></div>
<div class="a" style="left:520px;top:164px;width:225px;height:1px;background:repeating-linear-gradient(90deg,#111 0 1px,transparent 1px 2px)"></div>
<div class="a" style="left:746px;top:146px;width:93px;height:1px;background:repeating-linear-gradient(90deg,#111 0 1px,transparent 1px 2px)"></div>
<div class="a" style="left:746px;top:164px;width:93px;height:1px;background:repeating-linear-gradient(90deg,#111 0 1px,transparent 1px 2px)"></div>
<div class="a" style="left:840px;top:146px;width:135px;height:1px;background:repeating-linear-gradient(90deg,#111 0 1px,transparent 1px 2px)"></div>
<div class="a" style="left:840px;top:164px;width:135px;height:1px;background:repeating-linear-gradient(90deg,#111 0 1px,transparent 1px 2px)"></div>
<div class="a" style="left:976px;top:146px;width:133px;height:1px;background:repeating-linear-gradient(90deg,#111 0 1px,transparent 1px 2px)"></div>
<div class="a" style="left:976px;top:164px;width:133px;height:1px;background:repeating-linear-gradient(90deg,#111 0 1px,transparent 1px 2px)"></div>
<div class="a" style="left:1110px;top:146px;width:266px;height:1px;background:repeating-linear-gradient(90deg,#111 0 1px,transparent 1px 2px)"></div>
<div class="a" style="left:1110px;top:164px;width:266px;height:1px;background:repeating-linear-gradient(90deg,#111 0 1px,transparent 1px 2px)"></div>
<div class="a" style="left:1377px;top:146px;width:267px;height:1px;background:repeating-linear-gradient(90deg,#111 0 1px,transparent 1px 2px)"></div>
<div class="a" style="left:1377px;top:164px;width:267px;height:1px;background:repeating-linear-gradient(90deg,#111 0 1px,transparent 1px 2px)"></div>
<div class="a" style="left:1645px;top:146px;width:272px;height:1px;background:repeating-linear-gradient(90deg,#111 0 1px,transparent 1px 2px)"></div>
<div class="a" style="left:1645px;top:164px;width:272px;height:1px;background:repeating-linear-gradient(90deg,#111 0 1px,transparent 1px 2px)"></div>
<div class="a" style="left:13px;top:146px;width:1px;height:19px;background:repeating-linear-gradient(180deg,#111 0 1px,transparent 1px 2px)"></div>
<div class="a" style="left:1376px;top:144px;width:39px;height:3px;background:#e5121b"></div>
<div class="a" style="left:1624px;top:184px;width:26px;height:3px;background:#e5121b"></div>
<div class="a" style="left:1622px;top:224px;width:28px;height:3px;background:#e5121b"></div>
<div class="a" style="left:1622px;top:324px;width:25px;height:3px;background:#e5121b"></div>
<div class="a" style="left:1622px;top:465px;width:26px;height:3px;background:#e5121b"></div>
</body></html>
